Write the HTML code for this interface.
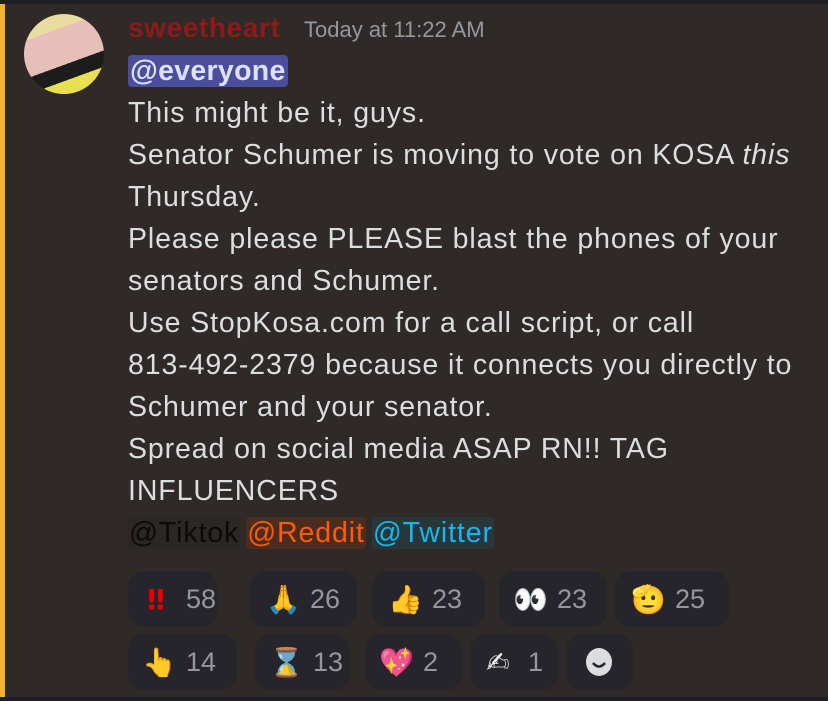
<!DOCTYPE html>
<html><head><meta charset="utf-8"><style>
*{margin:0;padding:0;box-sizing:border-box}
body{width:828px;height:701px;background:#2f2a27;position:relative;overflow:hidden;font-family:"Liberation Sans","DejaVu Sans",sans-serif}
.top{position:absolute;left:0;top:0;width:828px;height:4px;background:#1e1f24}
.bot{position:absolute;left:0;top:697px;width:828px;height:4px;background:#1e1f24}
.bar{position:absolute;left:0;top:4px;width:5px;height:693px;background:#f0b232}
.av{position:absolute;left:24px;top:14px;width:80px;height:80px;border-radius:50%;overflow:hidden;background:linear-gradient(160deg,#e8dca0 0 25%,#e6c0b8 25% 60%,#1c1c1c 60% 75%,#e8e050 75%)}
.name{position:absolute;left:128px;top:12px;font-size:28px;letter-spacing:0.6px;font-weight:bold;color:#8e1a1a}
.time{position:absolute;left:304px;top:17px;font-size:22px;color:#9497a0}
.txt{position:absolute;left:128px;top:50px;font-size:28.5px;letter-spacing:0.9px;line-height:42px;color:#dbdee1;white-space:nowrap}
.ev{background:#4a4e9c;color:#dee0fc;border-radius:4px;padding:0 2px;font-weight:bold;letter-spacing:0.3px}
.m{border-radius:4px;padding:0 1px}
.r{position:absolute;height:56px;background:#25252b;border-radius:16px;display:flex;align-items:center;padding-left:14px;font-size:27px;color:#9497a0;gap:16px}
.e{font-size:28px;font-family:"DejaVu Sans",sans-serif;width:28px;text-align:center}
</style></head><body>
<div class="top"></div><div class="bar"></div><div class="bot"></div>
<div class="av"></div>
<div class="name">sweetheart</div>
<div class="time">Today at 11:22 AM</div>
<div class="txt"><span class="ev">@everyone</span><br>This might be it, guys.<br>Senator Schumer is moving to vote on KOSA <i>this</i><br>Thursday.<br>Please please PLEASE blast the phones of your<br>senators and Schumer.<br>Use StopKosa.com for a call script, or call<br>813-492-2379 because it connects you directly to<br>Schumer and your senator.<br>Spread on social media ASAP RN!! TAG<br>INFLUENCERS<br><span class="m" style="background:#2a2724;color:#0a0a0a">@Tiktok</span><span class="m" style="background:#4a2d1e;color:#ff5a0a;margin-left:6px">@Reddit</span><span class="m" style="background:#28383a;color:#1ab5ee;margin-left:6px">@Twitter</span></div>
<div class="r" style="left:128px;top:571px;width:89px"><span class="e" style="color:#e00;font-weight:bold">‼</span>58</div>
<div class="r" style="left:250px;top:571px;width:107px;padding-left:16px"><span class="e" style="color:#f5c542">🙏</span>26</div>
<div class="r" style="left:372px;top:571px;width:113px;padding-left:16px"><span class="e" style="color:#f5c542">👍</span>23</div>
<div class="r" style="left:499px;top:571px;width:108px"><span class="e">👀</span>23</div>
<div class="r" style="left:615px;top:571px;width:114px;padding-left:16px"><span class="e" style="color:#f5c542">🫡</span>25</div>
<div class="r" style="left:128px;top:634px;width:109px"><span class="e" style="color:#f5c542">👆</span>14</div>
<div class="r" style="left:255px;top:634px;width:95px"><span class="e" style="color:#a87">⌛</span>13</div>
<div class="r" style="left:365px;top:634px;width:97px"><span class="e" style="color:#e040a0">💖</span>2</div>
<div class="r" style="left:470px;top:634px;width:88px"><span class="e" style="color:#eee">✍</span>1</div>
<div class="r" style="left:566px;top:634px;width:67px;padding-left:19px"><svg width="28" height="30" viewBox="0 0 28 30"><ellipse cx="14" cy="15" rx="13" ry="14" fill="#dcdde0"/><path d="M8 16q6 7 12 0" stroke="#25252b" stroke-width="2.5" fill="none"/></svg></div>
</body></html>
